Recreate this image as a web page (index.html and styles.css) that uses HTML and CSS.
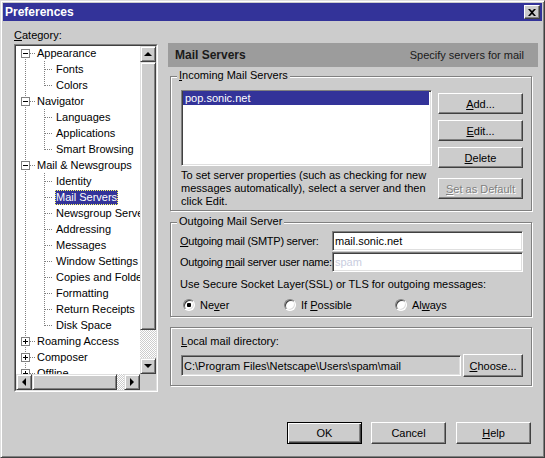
FILE: index.html
```html
<!DOCTYPE html>
<html lang="en">
<head>
    <meta charset="UTF-8">
    <title>Preferences</title>
    <link rel="stylesheet" href="styles.css">
</head>
<body>

    <div class="window">
        <div class="titlebar">
            <span class="title">Preferences</span>
            <span class="close-btn">
                <svg width="8" height="7" viewBox="0 0 8 7"><path d="M0 0h2l2 2 2-2h2L5 3.5 8 7H6L4 5 2 7H0l3-3.5z" fill="#000"/></svg>
            </span>
        </div>

        <div class="main">
            <div class="sidebar">
                <div class="cat-label"><u>C</u>ategory:</div>
                <div class="tree">
                    <div class="tree-inner">
                        <div class="tree-view">
                            <div class="rows">
                                <div class="row top first"><span class="toggle minus"></span><span class="label">Appearance</span></div>
                                <div class="row child"><span class="label">Fonts</span></div>
                                <div class="row child last"><span class="label">Colors</span></div>
                                <div class="row top"><span class="toggle minus"></span><span class="label">Navigator</span></div>
                                <div class="row child"><span class="label">Languages</span></div>
                                <div class="row child"><span class="label">Applications</span></div>
                                <div class="row child last"><span class="label">Smart Browsing</span></div>
                                <div class="row top"><span class="toggle minus"></span><span class="label">Mail &amp; Newsgroups</span></div>
                                <div class="row child"><span class="label">Identity</span></div>
                                <div class="row child"><span class="label selected">Mail Servers</span></div>
                                <div class="row child"><span class="label">Newsgroup Servers</span></div>
                                <div class="row child"><span class="label">Addressing</span></div>
                                <div class="row child"><span class="label">Messages</span></div>
                                <div class="row child"><span class="label">Window Settings</span></div>
                                <div class="row child"><span class="label">Copies and Folders</span></div>
                                <div class="row child"><span class="label">Formatting</span></div>
                                <div class="row child"><span class="label">Return Receipts</span></div>
                                <div class="row child last"><span class="label">Disk Space</span></div>
                                <div class="row top"><span class="toggle plus"></span><span class="label">Roaming Access</span></div>
                                <div class="row top"><span class="toggle plus"></span><span class="label">Composer</span></div>
                                <div class="row top"><span class="toggle plus"></span><span class="label">Offline</span></div>
                                <div class="row top"><span class="toggle plus"></span><span class="label">Advanced</span></div>
                            </div>
                        </div>
                        <div class="vscroll">
                            <div class="sb-btn"><span class="arrow up"></span></div>
                            <div class="sb-thumb v"></div>
                            <div class="sb-track"></div>
                            <div class="sb-btn"><span class="arrow down"></span></div>
                        </div>
                        <div class="hscroll">
                            <div class="sb-btn"><span class="arrow left"></span></div>
                            <div class="sb-thumb h"></div>
                            <div class="sb-track"></div>
                            <div class="sb-btn"><span class="arrow right"></span></div>
                        </div>
                        <div class="corner"></div>
                    </div>
                </div>
            </div>

            <div class="panel">
                <div class="panel-header">
                    <span class="panel-title">Mail Servers</span>
                    <span class="panel-desc">Specify servers for mail</span>
                </div>

                <div class="group incoming">
                    <span class="legend"><u>I</u>ncoming Mail Servers</span>
                    <div class="incoming-body">
                        <div class="list-col">
                            <div class="listbox">
                                <div class="list-item selected">pop.sonic.net</div>
                            </div>
                            <p class="hint">To set server properties (such as checking for new messages automatically), select a server and then click Edit.</p>
                        </div>
                        <div class="btn-col">
                            <button class="btn"><u>A</u>dd...</button>
                            <button class="btn"><u>E</u>dit...</button>
                            <button class="btn"><u>D</u>elete</button>
                            <button class="btn disabled gap"><u>S</u>et as Default</button>
                        </div>
                    </div>
                </div>

                <div class="group outgoing">
                    <span class="legend">Outgoing Mail Server</span>
                    <div class="field-row">
                        <span class="field-label"><u>O</u>utgoing mail (SMTP) server:</span>
                        <input class="field" type="text" value="mail.sonic.net">
                    </div>
                    <div class="field-row second">
                        <span class="field-label">Outgoing <u>m</u>ail server user name:</span>
                        <input class="field faint" type="text" value="spam">
                    </div>
                    <div class="ssl-label">Use Secure Socket Layer(SSL) or TLS for outgoing messages:</div>
                    <div class="radio-row">
                        <label class="radio-opt first"><span class="radio checked"></span><span>Ne<u>v</u>er</span></label>
                        <label class="radio-opt second"><span class="radio"></span><span>If <u>P</u>ossible</span></label>
                        <label class="radio-opt"><span class="radio"></span><span>Al<u>w</u>ays</span></label>
                    </div>
                </div>

                <div class="group local">
                    <div class="local-label"><u>L</u>ocal mail directory:</div>
                    <div class="local-row">
                        <input class="field path" type="text" value="C:\Program Files\Netscape\Users\spam\mail" readonly>
                        <button class="btn choose"><u>C</u>hoose...</button>
                    </div>
                </div>
            </div>
        </div>

        <div class="footer">
            <button class="btn wide default">OK</button>
            <button class="btn wide">Cancel</button>
            <button class="btn wide help"><u>H</u>elp</button>
        </div>
    </div>

</body>
</html>
```

FILE: styles.css
```css
* {
    box-sizing: border-box;
}

body {
    margin: 0;
    font-family: 'Liberation Sans', Arial, sans-serif;
    font-size: 11px;
    color: #000;
    background-color: #ccc;
}

u {
    text-decoration: underline;
}

.window {
    width: 545px;
    height: 458px;
    background-color: #ccc;
    border: 1px solid;
    border-color: #dfdfdf #404040 #404040 #dfdfdf;
    box-shadow: inset 1px 1px #fff, inset -1px -1px #808080;
    padding: 2px;
    display: flex;
    flex-direction: column;
}

/* title bar */
.titlebar {
    height: 18px;
    background-color: #333399;
    color: #fff;
    display: flex;
    align-items: center;
    justify-content: space-between;
    padding: 0 2px;
}

.title {
    font-weight: bold;
    font-size: 12px;
}

.close-btn {
    width: 16px;
    height: 14px;
    background-color: #ccc;
    border: 1px solid;
    border-color: #fff #404040 #404040 #fff;
    box-shadow: inset -1px -1px #808080;
    display: flex;
    align-items: center;
    justify-content: center;
}

.main {
    display: flex;
    gap: 10px;
    padding: 8px 0 0 11px;
}

/* category tree */
.sidebar {
    width: 144px;
}

.cat-label {
    height: 13px;
    line-height: 13px;
    margin-bottom: 2px;
}

.tree {
    height: 348px;
    border: 1px solid;
    border-color: #808080 #fff #fff #808080;
}

.tree-inner {
    height: 100%;
    border: 1px solid;
    border-color: #404040 #dfdfdf #dfdfdf #404040;
    display: grid;
    grid-template-columns: 1fr 16px;
    grid-template-rows: 1fr 16px;
}

.tree-view {
    background-color: #fff;
    overflow: hidden;
}

.rows {
    margin-top: -1px;
}

.row {
    height: 16px;
    display: flex;
    align-items: center;
    white-space: nowrap;
}

.row.top {
    padding-left: 5px;
    background:
        repeating-linear-gradient(90deg, #808080 0 1px, transparent 1px 2px) 14px 8px / 5px 1px no-repeat,
        repeating-linear-gradient(#808080 0 1px, transparent 1px 2px) 9px 0 / 1px 16px no-repeat;
}

.row.top.first {
    background:
        repeating-linear-gradient(90deg, #808080 0 1px, transparent 1px 2px) 14px 8px / 5px 1px no-repeat,
        repeating-linear-gradient(#808080 0 1px, transparent 1px 2px) 9px 8px / 1px 8px no-repeat;
}

.row.child {
    padding-left: 39px;
    background:
        repeating-linear-gradient(90deg, #808080 0 1px, transparent 1px 2px) 29px 8px / 8px 1px no-repeat,
        repeating-linear-gradient(#808080 0 1px, transparent 1px 2px) 28px 0 / 1px 16px no-repeat,
        repeating-linear-gradient(#808080 0 1px, transparent 1px 2px) 9px 0 / 1px 16px no-repeat;
}

.row.child.last {
    background:
        repeating-linear-gradient(90deg, #808080 0 1px, transparent 1px 2px) 29px 8px / 8px 1px no-repeat,
        repeating-linear-gradient(#808080 0 1px, transparent 1px 2px) 28px 0 / 1px 9px no-repeat,
        repeating-linear-gradient(#808080 0 1px, transparent 1px 2px) 9px 0 / 1px 16px no-repeat;
}

.toggle {
    width: 9px;
    height: 9px;
    flex: none;
    border: 1px solid #808080;
    margin-right: 6px;
    background: linear-gradient(#000, #000) center / 5px 1px no-repeat, #fff;
}

.toggle.plus {
    background:
        linear-gradient(#000, #000) center / 5px 1px no-repeat,
        linear-gradient(#000, #000) center / 1px 5px no-repeat,
        #fff;
}

.label {
    padding: 0 1px;
    height: 15px;
    line-height: 15px;
}

.label.selected {
    background-color: #333399;
    color: #fff;
    outline: 1px dotted #ffff66;
    outline-offset: -1px;
}

/* scrollbars */
.vscroll {
    display: flex;
    flex-direction: column;
}

.hscroll {
    display: flex;
}

.sb-btn,
.sb-thumb {
    flex: none;
    background-color: #ccc;
    border: 1px solid;
    border-color: #dfdfdf #404040 #404040 #dfdfdf;
    box-shadow: inset 1px 1px #fff, inset -1px -1px #808080;
}

.sb-btn {
    width: 16px;
    height: 16px;
    display: flex;
    align-items: center;
    justify-content: center;
}

.sb-thumb.v {
    height: 268px;
}

.sb-thumb.h {
    width: 85px;
}

.sb-track {
    flex: 1;
    background: repeating-conic-gradient(#fff 0 25%, #ccc 0 50%) 0 0 / 2px 2px;
}

.corner {
    background-color: #ccc;
}

.arrow {
    width: 0;
    height: 0;
    border: 4px solid transparent;
}

.arrow.up {
    border-top: 0;
    border-bottom-color: #000;
    margin-top: -1px;
}

.arrow.down {
    border-bottom: 0;
    border-top-color: #000;
}

.arrow.left {
    border-left: 0;
    border-right-color: #000;
    margin-left: -1px;
}

.arrow.right {
    border-right: 0;
    border-left-color: #000;
}

/* right panel */
.panel {
    width: 370px;
    margin-top: 14px;
}

.panel-header {
    height: 24px;
    background:
        radial-gradient(ellipse 26px 14px at 480px 50%, rgba(255, 255, 255, 0.28), rgba(255, 255, 255, 0)),
        #9c9c9c;
    display: flex;
    align-items: center;
    justify-content: space-between;
    padding: 0 14px 0 7px;
    color: #1a1a1a;
}

.panel-title {
    font-weight: bold;
    font-size: 12px;
}

.group {
    position: relative;
    border: 1px solid #808080;
    box-shadow: inset 1px 1px #fff, 1px 1px #fff;
    margin: 0 6px 0 2px;
}

.legend {
    position: absolute;
    top: -8px;
    left: 6px;
    padding: 0 2px;
    line-height: 13px;
    background-color: #ccc;
}

.incoming {
    margin-top: 9px;
    padding: 13px 8px 2px 10px;
}

.incoming-body {
    display: flex;
    gap: 6px;
}

.list-col {
    width: 251px;
}

.listbox {
    height: 76px;
    background-color: #fff;
    border: 1px solid;
    border-color: #808080 #fff #fff #808080;
    box-shadow: inset 1px 1px #404040, inset -1px -1px #dfdfdf;
    padding: 0 2px 0 1px;
}

.list-item {
    height: 14px;
    line-height: 14px;
    padding-left: 2px;
}

.list-item.selected {
    background-color: #333399;
    color: #fff;
}

.hint {
    margin: 3px 0 0;
    line-height: 13px;
}

.btn-col {
    width: 85px;
    display: flex;
    flex-direction: column;
    gap: 6px;
    padding-top: 3px;
}

.btn {
    height: 21px;
    padding: 0;
    font: inherit;
    color: #000;
    background-color: #ccc;
    border: 1px solid;
    border-color: #fff #404040 #404040 #fff;
    box-shadow: inset -1px -1px #808080;
}

.btn.gap {
    margin-top: 4px;
}

.btn.disabled {
    color: #808080;
    text-shadow: 1px 1px #fff;
}

.outgoing {
    margin-top: 11px;
    padding: 8px 8px 4px 9px;
}

.field-row {
    display: flex;
    align-items: center;
    height: 20px;
}

.field-row.second {
    margin-top: 1px;
}

.field-label {
    width: 152px;
    flex: none;
    line-height: 13px;
    white-space: nowrap;
    letter-spacing: -0.25px;
}

.field {
    width: 191px;
    height: 20px;
    font: inherit;
    color: #000;
    padding: 0 2px;
    background-color: #fff;
    border: 1px solid;
    border-color: #808080 #fff #fff #808080;
    box-shadow: inset 1px 1px #404040, inset -1px -1px #dfdfdf;
    outline: none;
}

.field.faint {
    color: #c9cde0;
}

.ssl-label {
    margin-top: 6px;
    line-height: 13px;
}

.radio-row {
    display: flex;
    align-items: center;
    height: 14px;
    margin-top: 7px;
    padding-left: 3px;
}

.radio-opt {
    display: flex;
    align-items: center;
    gap: 5px;
    white-space: nowrap;
}

.radio-opt.first {
    width: 101px;
}

.radio-opt.second {
    width: 111px;
}

.radio {
    width: 12px;
    height: 12px;
    flex: none;
    border-radius: 50%;
    background-color: #fff;
    border: 1px solid;
    border-color: #808080 #fff #fff #808080;
    box-shadow: inset 1px 1px #404040, inset -1px -1px #dfdfdf;
}

.radio.checked {
    background: radial-gradient(circle, #000 0 2px, #fff 2.5px);
}

.local {
    margin-top: 10px;
    padding: 7px 8px 8px 10px;
}

.local-label {
    line-height: 13px;
}

.local-row {
    display: flex;
    align-items: center;
    gap: 2px;
    margin-top: 6px;
    height: 23px;
}

.field.path {
    width: 280px;
    height: 21px;
    background-color: #ccc;
}

.btn.choose {
    width: 60px;
    height: 23px;
}

/* dialog buttons */
.footer {
    margin-top: auto;
    display: flex;
    justify-content: flex-end;
    gap: 9px;
    padding: 0 11px 11px 0;
}

.btn.wide {
    width: 75px;
    height: 22px;
}

.btn.default {
    border: 1px solid #000;
    box-shadow: inset 1px 1px #fff, inset -1px -1px #404040, inset -2px -2px #808080;
}

.btn.help {
    margin-left: 1px;
}
```
